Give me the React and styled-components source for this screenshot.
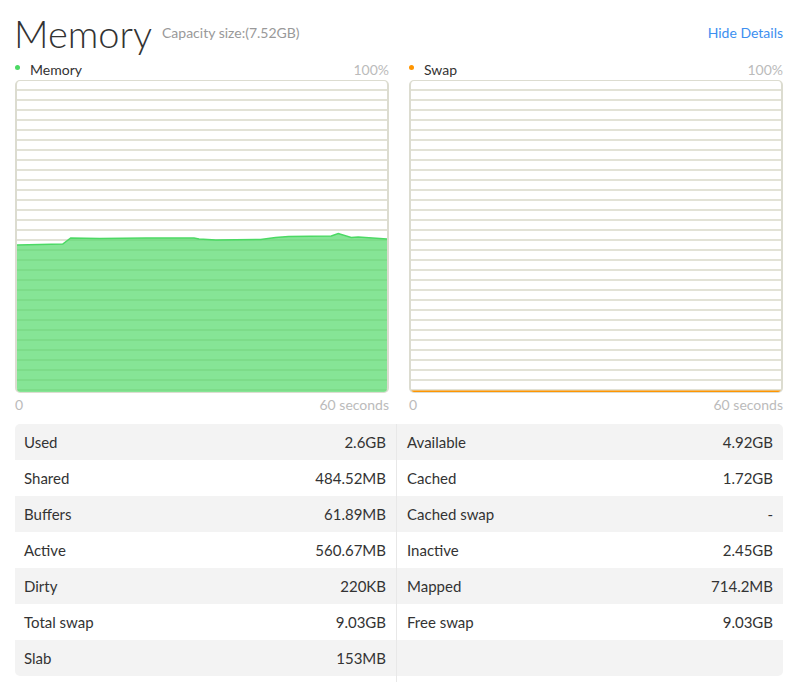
import React from 'react';
import styled, { createGlobalStyle } from 'styled-components';

const GlobalStyle = createGlobalStyle`
  body {
    margin: 0;
    background: #fff;
    font-family: Lato, "Noto Sans", sans-serif;
    color: #333;
  }
`;

const memoryPoints = [
  [0, 164], [46, 163], [54, 157], [83, 157.5], [130, 157], [178, 157], [183, 158],
  [200, 159], [245, 158.5], [260, 156.5], [273, 155.5], [316, 155], [323, 152.5],
  [336, 156.5], [343, 156], [372, 158],
];

const details = [
  ['Used', '2.6GB', 'Available', '4.92GB'],
  ['Shared', '484.52MB', 'Cached', '1.72GB'],
  ['Buffers', '61.89MB', 'Cached swap', '-'],
  ['Active', '560.67MB', 'Inactive', '2.45GB'],
  ['Dirty', '220KB', 'Mapped', '714.2MB'],
  ['Total swap', '9.03GB', 'Free swap', '9.03GB'],
  ['Slab', '153MB', '', ''],
];

function App() {
  const line = memoryPoints.map(([x, y]) => `${x},${y}`).join(' ');
  const area = `0,311 ${line} 372,311`;

  return (
    <Page>
      <GlobalStyle />
      <Header>
        <Title>Memory</Title>
        <Capacity>Capacity size:(7.52GB)</Capacity>
        <HideLink href="#">Hide Details</HideLink>
      </Header>

      <Charts>
        <ChartCol>
          <Legend>
            <Dot color="#4cd964" />
            <LegendName>Memory</LegendName>
            <Muted>100%</Muted>
          </Legend>
          <ChartBox>
            <svg width="100%" height="100%" viewBox="0 0 372 311" preserveAspectRatio="none">
              <polygon points={area} fill="rgba(76, 217, 100, 0.68)" />
              <polyline points={line} fill="none" stroke="#4cd964" strokeWidth="1.5" />
            </svg>
          </ChartBox>
          <Axis>
            <span>0</span>
            <span>60 seconds</span>
          </Axis>
        </ChartCol>

        <ChartCol>
          <Legend>
            <Dot color="#ff9500" />
            <LegendName>Swap</LegendName>
            <Muted>100%</Muted>
          </Legend>
          <ChartBox>
            <svg width="100%" height="100%" viewBox="0 0 372 311" preserveAspectRatio="none">
              <line x1="0" y1="310.5" x2="372" y2="310.5" stroke="#ff9500" strokeWidth="2" />
            </svg>
          </ChartBox>
          <Axis>
            <span>0</span>
            <span>60 seconds</span>
          </Axis>
        </ChartCol>
      </Charts>

      <Table>
        <Column side="left">
          {details.map((d, i) => (
            <Row key={d[0]} odd={i % 2 === 0} side="left" first={i === 0} last={i === details.length - 1}>
              <span>{d[0]}</span>
              <span>{d[1]}</span>
            </Row>
          ))}
        </Column>
        <Column side="right">
          {details.map((d, i) => (
            <Row key={d[0]} odd={i % 2 === 0} side="right" first={i === 0} last={i === details.length - 1}>
              <span>{d[2]}</span>
              <span>{d[3]}</span>
            </Row>
          ))}
        </Column>
      </Table>
    </Page>
  );
}

export default App;

const Page = styled.div`
  width: 768px;
  padding: 8px 0 0 15px;
`;

const Header = styled.div`
  display: flex;
  align-items: center;
  height: 50px;
`;

const Title = styled.h1`
  margin: 0 0 0 -1px;
  font-size: 38px;
  font-weight: 300;
  line-height: 50px;
  color: #333;
`;

const Capacity = styled.span`
  margin-left: 10px;
  margin-top: -2px;
  font-size: 14px;
  color: #999;
`;

const HideLink = styled.a`
  margin-left: auto;
  margin-top: -2px;
  font-size: 14px;
  color: #3d8ff0;
  text-decoration: none;
`;

const Charts = styled.div`
  display: grid;
  grid-template-columns: 1fr 1fr;
  gap: 20px;
`;

const ChartCol = styled.div`
  display: flex;
  flex-direction: column;
`;

const Legend = styled.div`
  display: flex;
  align-items: center;
  height: 22px;
  font-size: 14px;
`;

const Dot = styled.span`
  width: 5px;
  height: 5px;
  border-radius: 50%;
  background: ${p => p.color};
  margin: 0 10px 0 0;
  position: relative;
  top: -2px;
`;

const LegendName = styled.span`
  color: #333;
`;

const Muted = styled.span`
  margin-left: auto;
  color: #bbb;
`;

const ChartBox = styled.div`
  height: 311px;
  border: 2px solid #dcdcd0;
  border-top-width: 1px;
  border-bottom-width: 1px;
  border-radius: 5px;
  overflow: hidden;
  background: repeating-linear-gradient(
    to bottom,
    transparent 0 8px,
    #e2e2d6 8px 10px
  );

  svg {
    display: block;
  }
`;

const Axis = styled.div`
  display: flex;
  justify-content: space-between;
  height: 22px;
  align-items: center;
  font-size: 14px;
  color: #bbb;
`;

const Table = styled.div`
  display: grid;
  grid-template-columns: 382px 1fr;
  margin-top: 9px;
  font-size: 15px;
  color: #333;
`;

const Column = styled.div`
  display: flex;
  flex-direction: column;
  padding-bottom: ${p => (p.side === 'left' ? '6px' : '0')};
  border-right: ${p => (p.side === 'left' ? '1px solid #e8e8e8' : 'none')};
`;

const Row = styled.div`
  display: flex;
  justify-content: space-between;
  align-items: center;
  height: 36px;
  padding: 0 10px 0 ${p => (p.side === 'left' ? '9px' : '10px')};
  background: ${p => (p.odd ? '#f3f3f3' : '#fff')};
  border-top-left-radius: ${p => (p.side === 'left' && p.first ? '5px' : '0')};
  border-bottom-left-radius: ${p => (p.side === 'left' && p.last ? '5px' : '0')};
  border-top-right-radius: ${p => (p.side === 'right' && p.first ? '5px' : '0')};
  border-bottom-right-radius: ${p => (p.side === 'right' && p.last ? '5px' : '0')};
`;
